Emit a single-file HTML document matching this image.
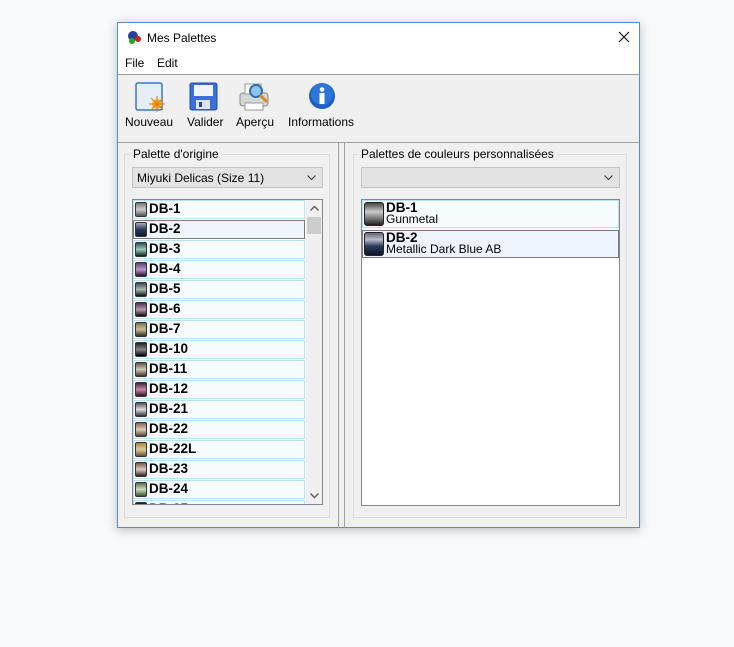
<!DOCTYPE html>
<html><head><meta charset="utf-8"><style>
*{box-sizing:border-box;margin:0;padding:0}
body{width:734px;height:647px;background:#f7fbfe;font-family:"Liberation Sans",sans-serif;font-size:12px;position:relative;overflow:hidden}
.win{position:absolute;left:117px;top:22px;width:523px;height:506px;background:#f0f0f0;border:1px solid #5a8fc8;box-shadow:0 2px 10px rgba(0,0,0,.25)}
.title{position:absolute;left:0;top:0;width:521px;height:30px;background:#fff}
.menu{position:absolute;left:0;top:30px;width:521px;height:21px;background:#fff}
.abs{position:absolute}
.grp{position:absolute;border:1px solid #dcdcdc}
.combo{position:absolute;height:21px;background:#e3e3e3;border:1px solid #c4c4c4}
.list{position:absolute;background:#fff;border:1px solid #828790}
.it{position:absolute;left:0;width:172px;height:19px;background:#f7fcfe;border:1px solid #b9e2f5;font-weight:bold;font-size:13.5px;line-height:15px;padding-left:15px;color:#000}
.sw{position:absolute;left:1px;top:1px;width:12px;height:15px;border-radius:2px;border:1px solid #333}
.ri{position:absolute;left:0;width:257px;height:28px;background:#f7fcfe;border:1px solid #b9e2f5;padding-left:23px;line-height:11px;padding-top:1px}
.ri b{font-size:13.5px;display:block;line-height:12px}
.rsw{position:absolute;left:1px;top:1px;width:20px;height:24px;border-radius:3px;border:1px solid #222}
</style></head><body>
<div class="win">
<div class="title">
<svg class="abs" style="left:8px;top:6px" width="16" height="16"><circle cx="7" cy="7" r="5" fill="#2a3f9a"/><circle cx="12" cy="10" r="3" fill="#c22"/><circle cx="6" cy="12" r="3" fill="#2a2"/></svg>
<div class="abs" style="left:29px;top:8px;font-size:12px">Mes Palettes</div>
<svg class="abs" style="left:500px;top:8px" width="12" height="12"><path d="M1 1L11 11M11 1L1 11" stroke="#111" stroke-width="1.2"/></svg>
</div>
<div class="menu"><span class="abs" style="left:7px;top:3px">File</span><span class="abs" style="left:39px;top:3px">Edit</span></div>
<div class="abs" style="left:0;top:51px;width:521px;height:1px;background:#a0a0a0"></div>
<svg class="abs" style="left:17px;top:59px" width="30" height="30"><rect x="1" y="1" width="26" height="27" rx="2" fill="#e6eef8" stroke="#3a78c6" stroke-width="1.5"/><circle cx="22" cy="22" r="5" fill="#f7b42c"/><path d="M22 14v16M14 22h16M16 16l12 12M28 16l-12 12" stroke="#e07b10" stroke-width="1"/></svg>
<div class="abs" style="left:7px;top:92px">Nouveau</div>
<svg class="abs" style="left:71px;top:59px" width="30" height="30"><rect x="1" y="1" width="27" height="27" rx="2" fill="#3d6fd8" stroke="#2448a8"/><rect x="5" y="3" width="19" height="11" fill="#eef3fb"/><rect x="7" y="18" width="14" height="9" fill="#dde4f0"/><rect x="10" y="20" width="3" height="5" fill="#2448a8"/></svg>
<div class="abs" style="left:69px;top:92px">Valider</div>
<svg class="abs" style="left:120px;top:58px" width="34" height="30"><rect x="2" y="12" width="28" height="13" rx="3" fill="#d6d6d6" stroke="#888"/><rect x="7" y="22" width="18" height="7" fill="#fff" stroke="#999"/><rect x="7" y="3" width="16" height="10" fill="#fff" stroke="#999"/><circle cx="18" cy="10" r="6" fill="#8ec6ef" stroke="#2f6fb5" stroke-width="2"/><path d="M22 14l7 7" stroke="#d88a20" stroke-width="3"/></svg>
<div class="abs" style="left:118px;top:92px">Aperçu</div>
<svg class="abs" style="left:190px;top:59px" width="28" height="28"><circle cx="14" cy="14" r="13" fill="#1b5fc7"/><circle cx="14" cy="12" r="11" fill="#3b84e0" opacity=".6"/><circle cx="14" cy="7.5" r="2.3" fill="#fff"/><rect x="11.5" y="11" width="5" height="11" fill="#fff"/></svg>
<div class="abs" style="left:170px;top:92px">Informations</div>
<div class="abs" style="left:0;top:119px;width:521px;height:1px;background:#a0a0a0"></div>
<div class="abs" style="left:220px;top:120px;width:1px;height:385px;background:#a0a0a0"></div>
<div class="abs" style="left:226px;top:120px;width:1px;height:385px;background:#a0a0a0"></div>

<div class="grp" style="left:6px;top:131px;width:206px;height:364px"></div>
<div class="abs" style="left:12px;top:124px;background:#f0f0f0;padding:0 3px">Palette d'origine</div>
<div class="combo" style="left:14px;top:144px;width:191px"><span class="abs" style="left:4px;top:3px">Miyuki Delicas (Size 11)</span><svg class="abs" style="right:6px;top:7px" width="9" height="6"><path d="M0.5 0.5L4.5 4.5L8.5 0.5" stroke="#333" fill="none"/></svg></div>
<div class="list" style="left:14px;top:176px;width:191px;height:306px;overflow:hidden">
<div class="abs" style="left:173px;top:0;width:16px;height:304px;background:#f0f0f0"></div>
<div class="abs" style="left:174px;top:17px;width:14px;height:17px;background:#cdcdcd"></div>
<svg class="abs" style="left:177px;top:6px" width="9" height="6"><path d="M0.5 4.5L4.5 0.5L8.5 4.5" stroke="#606060" stroke-width="1.5" fill="none"/></svg>
<svg class="abs" style="left:177px;top:293px" width="9" height="6"><path d="M0.5 0.5L4.5 4.5L8.5 0.5" stroke="#606060" stroke-width="1.5" fill="none"/></svg>
<div class="it" style="top:0"><i class="sw" style="background:linear-gradient(#777,#ccc,#555)"></i>DB-1</div>
<div class="it" style="top:20px;background:#eef5fd;border-color:#7a7a7a"><i class="sw" style="background:linear-gradient(#aab,#2a3a5a,#0d1a30)"></i>DB-2</div>
<div class="it" style="top:40px"><i class="sw" style="background:linear-gradient(#355,#9cb,#122)"></i>DB-3</div>
<div class="it" style="top:60px"><i class="sw" style="background:linear-gradient(#547,#b9c,#213)"></i>DB-4</div>
<div class="it" style="top:80px"><i class="sw" style="background:linear-gradient(#445,#aba,#112)"></i>DB-5</div>
<div class="it" style="top:100px"><i class="sw" style="background:linear-gradient(#435,#b9a,#111)"></i>DB-6</div>
<div class="it" style="top:120px"><i class="sw" style="background:linear-gradient(#775,#cb9,#332)"></i>DB-7</div>
<div class="it" style="top:140px"><i class="sw" style="background:linear-gradient(#222,#888,#000)"></i>DB-10</div>
<div class="it" style="top:160px"><i class="sw" style="background:linear-gradient(#654,#ccb,#432)"></i>DB-11</div>
<div class="it" style="top:180px"><i class="sw" style="background:linear-gradient(#424,#c8a,#312)"></i>DB-12</div>
<div class="it" style="top:200px"><i class="sw" style="background:linear-gradient(#555,#ddd,#333)"></i>DB-21</div>
<div class="it" style="top:220px"><i class="sw" style="background:linear-gradient(#865,#dcb,#543)"></i>DB-22</div>
<div class="it" style="top:240px"><i class="sw" style="background:linear-gradient(#a84,#dc9,#653)"></i>DB-22L</div>
<div class="it" style="top:260px"><i class="sw" style="background:linear-gradient(#755,#dcb,#322)"></i>DB-23</div>
<div class="it" style="top:280px"><i class="sw" style="background:linear-gradient(#575,#cdb,#353)"></i>DB-24</div>
<div class="it" style="top:300px"><i class="sw" style="background:#223"></i>DB-25</div>
</div>

<div class="grp" style="left:235px;top:131px;width:274px;height:364px"></div>
<div class="abs" style="left:240px;top:124px;background:#f0f0f0;padding:0 3px">Palettes de couleurs personnalisées</div>
<div class="combo" style="left:243px;top:144px;width:259px"><svg class="abs" style="right:6px;top:7px" width="9" height="6"><path d="M0.5 0.5L4.5 4.5L8.5 0.5" stroke="#333" fill="none"/></svg></div>
<div class="list" style="left:243px;top:176px;width:259px;height:307px">
<div class="ri" style="top:0"><i class="rsw" style="background:linear-gradient(#444,#ccc 40%,#777 70%,#222)"></i><b>DB-1</b>Gunmetal</div>
<div class="ri" style="top:30px;background:#eef5fd;border-color:#7a7a7a"><i class="rsw" style="background:linear-gradient(#667,#bbc 30%,#2a3a5a 60%,#0a1428)"></i><b>DB-2</b>Metallic Dark Blue AB</div>
</div>
</div>
</body></html>
